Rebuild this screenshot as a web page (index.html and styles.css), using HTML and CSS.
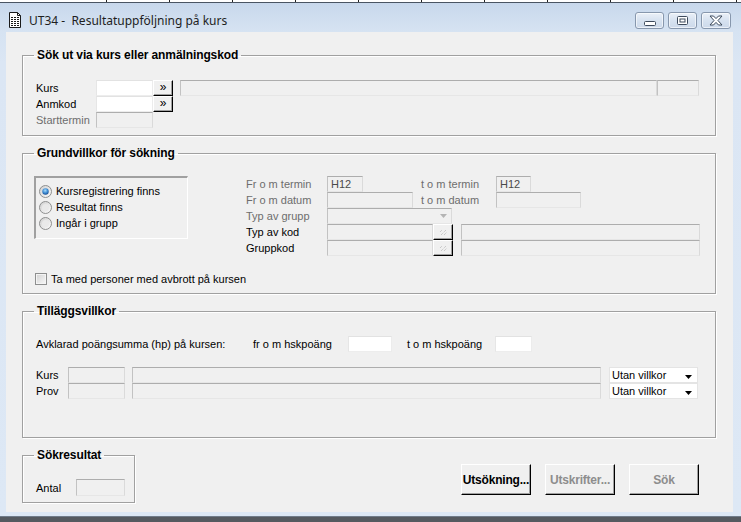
FILE: index.html
```html
<!DOCTYPE html>
<html lang="sv">
<head>
<meta charset="utf-8">
<title>UT34 - Resultatuppföljning på kurs</title>
<link rel="stylesheet" href="styles.css">
</head>
<body>
<div class="behind"></div>
<div class="window">
  <div class="titlebar">
    <svg class="appicon" width="12" height="16" viewBox="0 0 12 16">
      <path d="M0.5 0.5 H8.5 L11.5 3.5 V15.5 H0.5 Z" fill="#fff" stroke="#1a1a1a"/>
      <path d="M8.5 0.5 V3.5 H11.5" fill="none" stroke="#1a1a1a"/>
      <path d="M2 5.5 H10 M2 7.5 H10 M2 9.5 H10 M2 11.5 H10 M2 13.5 H10" stroke="#1a1a1a" stroke-dasharray="2 1"/>
    </svg>
    <span class="title">UT34 -&nbsp; Resultatuppföljning på kurs</span>
    <div class="wbtns">
      <span class="wbtn wmin"><svg width="12" height="6" viewBox="0 0 12 6"><rect x="0.5" y="1.5" width="11" height="4" rx="1" fill="#fff" stroke="#3d4a5c"/></svg></span>
      <span class="wbtn wmax"><svg width="11" height="9" viewBox="0 0 11 9"><rect x="0.5" y="0.5" width="10" height="8" rx="1" fill="#fff" stroke="#3d4a5c"/><rect x="3" y="3" width="5" height="3" fill="none" stroke="#3d4a5c"/></svg></span>
      <span class="wbtn wclose"><svg width="14" height="11" viewBox="0 0 14 11"><path d="M1 1 H4.5 L7 3.6 L9.5 1 H13 L9 5.5 L13 10 H9.5 L7 7.4 L4.5 10 H1 L5 5.5 Z" fill="#fff" stroke="#3d4a5c" stroke-linejoin="round"/></svg></span>
    </div>
  </div>

  <div class="client">
    <fieldset class="grp g1">
      <legend>Sök ut via kurs eller anmälningskod</legend>
      <div class="row">
        <span class="lbl l60">Kurs</span>
        <span class="fld white f57"></span>
        <span class="mini">»</span>
        <span class="fld f477 ml7"></span>
        <span class="fld f42"></span>
      </div>
      <div class="row">
        <span class="lbl l60">Anmkod</span>
        <span class="fld white f57"></span>
        <span class="mini">»</span>
      </div>
      <div class="row">
        <span class="lbl l60 gray">Starttermin</span>
        <span class="fld f57"></span>
      </div>
    </fieldset>

    <fieldset class="grp g2">
      <legend>Grundvillkor för sökning</legend>
      <div class="g2-top">
        <div class="radiobox">
          <div class="radio">
            <svg width="13" height="13" viewBox="0 0 13 13"><defs><linearGradient id="rf1" x1="0" y1="0" x2="1" y2="1"><stop offset="0" stop-color="#cfcfcf"/><stop offset="1" stop-color="#fcfcfc"/></linearGradient><radialGradient id="rb1" cx="45%" cy="35%" r="65%"><stop offset="0" stop-color="#a9dcfb"/><stop offset="0.6" stop-color="#3b8ad2"/><stop offset="1" stop-color="#1a4f94"/></radialGradient></defs><circle cx="6.5" cy="6.5" r="6" fill="url(#rf1)" stroke="#8e8f8f"/><circle cx="6.5" cy="6.5" r="3.2" fill="url(#rb1)"/></svg>
            <span>Kursregistrering finns</span>
          </div>
          <div class="radio">
            <svg width="13" height="13" viewBox="0 0 13 13"><defs><linearGradient id="rf2" x1="0" y1="0" x2="1" y2="1"><stop offset="0" stop-color="#cfcfcf"/><stop offset="1" stop-color="#fcfcfc"/></linearGradient></defs><circle cx="6.5" cy="6.5" r="6" fill="url(#rf2)" stroke="#8e8f8f"/><circle cx="6.5" cy="6.5" r="3.5" fill="#e9e9e9"/></svg>
            <span>Resultat finns</span>
          </div>
          <div class="radio">
            <svg width="13" height="13" viewBox="0 0 13 13"><defs><linearGradient id="rf3" x1="0" y1="0" x2="1" y2="1"><stop offset="0" stop-color="#cfcfcf"/><stop offset="1" stop-color="#fcfcfc"/></linearGradient></defs><circle cx="6.5" cy="6.5" r="6" fill="url(#rf3)" stroke="#8e8f8f"/><circle cx="6.5" cy="6.5" r="3.5" fill="#e9e9e9"/></svg>
            <span>Ingår i grupp</span>
          </div>
        </div>
        <div class="crit">
          <div class="row">
            <span class="lbl l81 gray">Fr o m termin</span>
            <span class="fld f36 val">H12</span>
            <span class="lbl l75 gray ml58">t o m termin</span>
            <span class="fld f35 val">H12</span>
          </div>
          <div class="row">
            <span class="lbl l81 gray">Fr o m datum</span>
            <span class="fld f86"></span>
            <span class="lbl l75 gray ml8">t o m datum</span>
            <span class="fld f85"></span>
          </div>
          <div class="row">
            <span class="lbl l81 gray">Typ av grupp</span>
            <span class="fld combo f125"><svg width="7" height="4" viewBox="0 0 7 4"><path d="M0 0 H7 L3.5 4 Z" fill="#b4b4b4"/></svg></span>
          </div>
          <div class="row">
            <span class="lbl l81">Typ av kod</span>
            <span class="fld f106"></span>
            <span class="mini hatch"><svg width="9" height="7" viewBox="0 0 9 7"><path d="M1 3 L3 1 M2 6 L7 1 M5 6 L8 3" stroke="#b8b8b8" stroke-dasharray="1 1"/></svg></span>
            <span class="fld f239 ml8"></span>
          </div>
          <div class="row">
            <span class="lbl l81">Gruppkod</span>
            <span class="fld f106"></span>
            <span class="mini hatch"><svg width="9" height="7" viewBox="0 0 9 7"><path d="M1 3 L3 1 M2 6 L7 1 M5 6 L8 3" stroke="#b8b8b8" stroke-dasharray="1 1"/></svg></span>
            <span class="fld f239 ml8"></span>
          </div>
        </div>
      </div>
      <div class="check">
        <span class="cbox"></span>
        <span>Ta med personer med avbrott på kursen</span>
      </div>
    </fieldset>

    <fieldset class="grp g3">
      <legend>Tilläggsvillkor</legend>
      <div class="row">
        <span class="lbl l217">Avklarad poängsumma (hp) på kursen:</span>
        <span class="lbl l95">fr o m hskpoäng</span>
        <span class="fld white f44"></span>
        <span class="lbl l88 ml15">t o m hskpoäng</span>
        <span class="fld white f37"></span>
      </div>
      <div class="rows2">
        <div class="row">
          <span class="lbl l32">Kurs</span>
          <span class="fld f57"></span>
          <span class="fld f469 ml7"></span>
          <span class="sel f89 ml8">Utan villkor<svg width="7" height="4" viewBox="0 0 7 4"><path d="M0 0 H7 L3.5 4 Z" fill="#000"/></svg></span>
        </div>
        <div class="row">
          <span class="lbl l32">Prov</span>
          <span class="fld f57"></span>
          <span class="fld f469 ml7"></span>
          <span class="sel f89 ml8">Utan villkor<svg width="7" height="4" viewBox="0 0 7 4"><path d="M0 0 H7 L3.5 4 Z" fill="#000"/></svg></span>
        </div>
      </div>
    </fieldset>

    <div class="bottom">
      <fieldset class="grp g4">
        <legend>Sökresultat</legend>
        <div class="row r17">
          <span class="lbl l40">Antal</span>
          <span class="fld f49 h17"></span>
        </div>
      </fieldset>
      <div class="actions">
        <button class="btn">Utsökning...</button>
        <button class="btn dis">Utskrifter...</button>
        <button class="btn dis">Sök</button>
      </div>
    </div>
  </div>
</div>
<div class="behind-bottom"></div>
</body>
</html>
```

FILE: styles.css
```css
* { box-sizing: border-box; }

html, body {
  margin: 0;
  padding: 0;
}

body {
  width: 741px;
  height: 522px;
  overflow: hidden;
  background: #ffffff;
  font-family: "Liberation Sans", Arial, sans-serif;
  font-size: 11px;
  color: #000;
}

.behind {
  height: 3px;
  background-color: #fff;
  background-image: repeating-linear-gradient(to right, transparent 0 62px, #222 62px 63px);
  background-position: 44px 0;
  border-bottom: 1px solid #4a5563;
}

.window {
  background: linear-gradient(#c8d8ec 0, #d6e3f2 29px, #dbe6f4 60px, #dde8f5 100%);
  padding: 0 8px 4px 6px;
  border-bottom: 1px solid #707c8a;
}

.titlebar {
  height: 29px;
  display: flex;
  align-items: flex-start;
}

.appicon {
  margin: 9px 0 0 3px;
  flex: none;
}

.title {
  margin: 10px 0 0 8px;
  line-height: 16px;
  font-family: "Noto Sans", "Open Sans", sans-serif;
  font-size: 12px;
  color: #1e1e1e;
  white-space: pre;
}

.wbtns {
  margin: 9px 2px 0 auto;
  display: flex;
  gap: 4px;
}

.wbtn {
  width: 29px;
  height: 17px;
  border: 1px solid #8797ad;
  border-radius: 3px;
  background: linear-gradient(#eaf0f8, #d7e2f0 50%, #ccd9ea);
  box-shadow: inset 0 0 0 1px rgba(255,255,255,0.6);
  display: flex;
  align-items: center;
  justify-content: center;
}

.wmin svg { margin-top: 5px; }
.wclose { width: 30px; }

.client {
  height: 480px;
  background: #f0f0f0;
  padding: 16px 17px 0 16px;
}

.grp {
  margin: 0;
  min-width: 0;
  border: 1px solid #a0a0a0;
  box-shadow: inset 1px 1px 0 #ffffff, 1px 1px 0 #ffffff;
  padding: 18px 12px 7px 13px;
}

.grp legend {
  font-weight: bold;
  font-size: 12px;
  line-height: 14px;
  letter-spacing: -0.1px;
  padding: 0 3px;
  margin-left: -2px;
}

.g2 { margin-top: 10px; padding-top: 16px; }
.g3 { margin-top: 10px; padding-bottom: 38px; }

.row {
  display: flex;
  align-items: center;
  height: 16px;
}

.r17 { height: 17px; }

.lbl {
  flex: none;
  white-space: nowrap;
  line-height: 16px;
}

.gray { color: #6d6d6d; }

.l32 { width: 32px; }
.l40 { width: 40px; }
.l60 { width: 60px; }
.l75 { width: 75px; }
.l81 { width: 81px; }
.l88 { width: 88px; }
.l95 { width: 95px; }
.l217 { width: 217px; }

.ml7 { margin-left: 7px; }
.ml8 { margin-left: 8px; }
.ml15 { margin-left: 15px; }
.ml58 { margin-left: 58px; }

.fld {
  flex: none;
  height: 16px;
  background: #f0f0f0;
  border: 1px solid;
  border-color: #adadad #dadada #e6e6e6 #c2c2c2;
  line-height: 14px;
  padding-left: 3px;
}

.fld.white {
  background: #fff;
  border-color: #e2e2e2 #ececec #ededed #e6e6e6;
}

.h17 { height: 17px; }

.val { color: #4a4a4a; }

.f35 { width: 35px; }
.f36 { width: 36px; }
.f37 { width: 37px; }
.f42 { width: 42px; }
.f44 { width: 44px; }
.f49 { width: 49px; }
.f57 { width: 57px; }
.f85 { width: 85px; }
.f86 { width: 86px; }
.f89 { width: 89px; }
.f106 { width: 106px; }
.f125 { width: 125px; }
.f239 { width: 239px; }
.f469 { width: 469px; }
.f477 { width: 477px; }

.combo {
  display: flex;
  align-items: center;
  justify-content: flex-end;
  padding-right: 4px;
}

.mini {
  flex: none;
  width: 20px;
  height: 16px;
  background: #f0f0f0;
  border: 1px solid;
  border-color: #ffffff #000 #000 #ffffff;
  box-shadow: inset -1px -1px 0 #a0a0a0;
  display: flex;
  align-items: center;
  justify-content: center;
  font-size: 12px;
  line-height: 12px;
  padding-bottom: 2px;
}

.hatch { padding: 0; }

.g2-top {
  display: flex;
  align-items: flex-start;
}

.radiobox {
  flex: none;
  width: 154px;
  height: 63px;
  margin-left: -2px;
  border-style: solid;
  border-width: 2px 1px 1px 2px;
  border-color: #a0a0a0 #ffffff #ffffff #a0a0a0;
  padding: 5px 0 0 3px;
}

.radio {
  display: flex;
  align-items: center;
  height: 16px;
  gap: 4px;
}

.radio svg { flex: none; }

.crit {
  margin-left: 58px;
}

.check {
  margin: 16px 0 0 -1px;
  height: 14px;
  display: flex;
  align-items: center;
  gap: 4px;
}

.cbox {
  width: 12px;
  height: 12px;
  border: 1px solid #8e8f8f;
  background: linear-gradient(135deg, #d2d2d2, #f8f8f8);
  box-shadow: inset 0 0 0 1px #f4f4f4;
}

.rows2 { margin-top: 15px; }

.sel {
  flex: none;
  height: 16px;
  background: #fff;
  border: 1px solid #e4e4e4;
  display: flex;
  align-items: center;
  justify-content: space-between;
  padding: 0 5px 0 2px;
  line-height: 14px;
}

.sel svg { margin-top: 3px; }

.bottom {
  display: flex;
  align-items: flex-start;
  margin-top: 10px;
}

.g4 {
  width: 113px;
  padding: 17px 4px 6px 13px;
}

.actions {
  margin: 16px 17px 0 auto;
  display: flex;
  gap: 14px;
}

.btn {
  width: 70px;
  height: 31px;
  padding: 0;
  background: #f0f0f0;
  border: 1px solid;
  border-color: #ffffff #000 #000 #ffffff;
  box-shadow: inset -1px -1px 0 #a0a0a0;
  font-family: "Liberation Sans", Arial, sans-serif;
  font-weight: bold;
  font-size: 12px;
  letter-spacing: -0.2px;
  color: #000;
}

.btn.dis { color: #8d8d8d; }

.behind-bottom {
  height: 6px;
  background: #555a60;
}
```
